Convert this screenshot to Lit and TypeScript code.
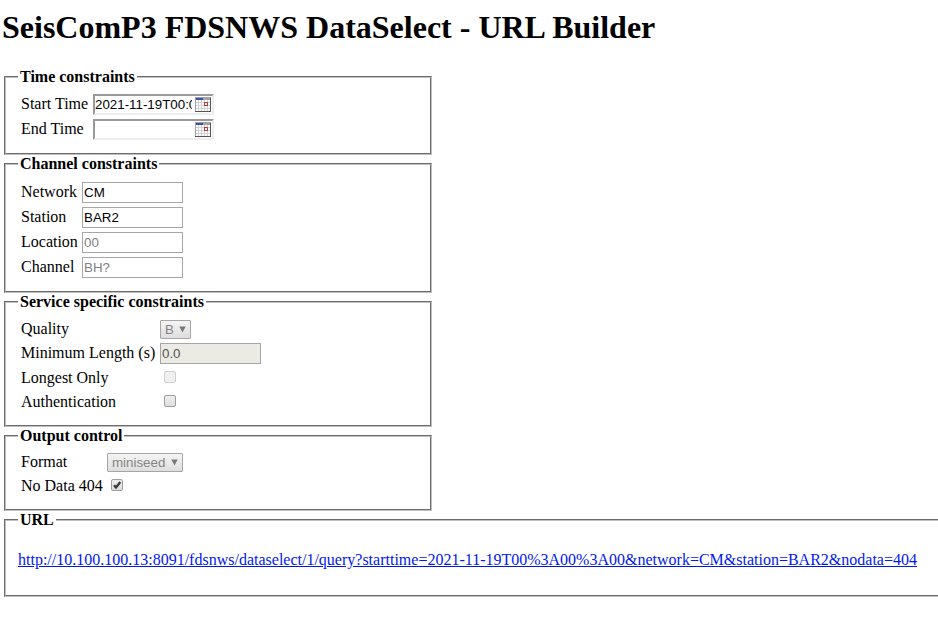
import { LitElement, html, css, svg } from "lit";
import { customElement } from "lit/decorators.js";

const calendarIcon = html`<svg class="calendar" width="16" height="15" viewBox="0 0 16 15" shape-rendering="crispEdges">
  <rect width="16" height="15" fill="#d3d3d3" />
  <rect width="1" height="15" fill="#a3a3a3" />
  <rect width="16" height="3" fill="#a3a3a3" />
  <rect x="1" y="1" width="7" height="2" fill="#3c50a8" />
  ${[3, 6, 9, 12].map((y) => [1, 4, 7, 10, 13].map((x) => svg`<rect x=${x} y=${y} width="2" height="2" fill="#fff" />`))}
  <rect x="9.5" y="5.5" width="3" height="3" fill="#fff" stroke="#b83c3c" />
  <rect x="15" y="1" width="1" height="14" fill="#555" />
  <rect y="14" width="16" height="1" fill="#555" />
</svg>`;

const arrow = html`<svg width="7" height="7" viewBox="0 0 7 7"><path d="M.3 .5h6.4L3.5 6.5z" fill="#777" /></svg>`;

@customElement("app-root")
export class AppRoot extends LitElement {
  static styles = css`
    :host {
      display: block;
      height: 632px;
      overflow: hidden;
      background: #fff;
      color: #000;
      font: 16px/18px "Liberation Serif", serif;
      padding: 0 2px;
      box-sizing: border-box;
    }
    h1 {
      margin: 0;
      height: 68px;
      padding-top: 9px;
      box-sizing: border-box;
      font-size: 32px;
      line-height: 36px;
      white-space: nowrap;
    }
    fieldset {
      box-sizing: border-box;
      width: 428px;
      margin: 0 2px;
      padding: 0 12px;
      border: 2px groove #c0c0c0;
    }
    legend {
      padding: 0 2px;
      height: 18px;
      font-weight: bold;
    }
    .time { height: 87px; }
    .channel { height: 138px; }
    .service { height: 134px; }
    .output { height: 84px; }
    .url { height: 86px; width: 950px; }
    .rows {
      display: grid;
      column-gap: 4px;
      padding-left: 3px;
      align-items: center;
      justify-content: start;
    }
    .rows > label { align-self: start; }
    .time .rows { grid-template-columns: 68px 121px; grid-auto-rows: 25px; padding-top: 6px; }
    .time label { padding-top: 3px; }
    .channel .rows { grid-template-columns: 57px 101px; grid-auto-rows: 25px; padding-top: 7px; }
    .channel label { padding-top: 3px; }
    .service .rows { grid-template-columns: 135px 101px; grid-template-rows: 25px 23px 24px 24px; padding-top: 6px; }
    .service label { padding-top: 3px; }
    .service label.raised { padding-top: 2px; }
    .service label.lowered { padding-top: 4px; }
    .output .rows { grid-template-columns: 82px 76px; grid-template-rows: 23px 23px; padding-top: 6px; }
    .output label { padding-top: 2px; }
    .output label.lowered { padding-top: 3px; }
    input {
      appearance: none;
      box-sizing: border-box;
      margin: 0;
      border-radius: 0;
      outline: none;
      font: 13.333px "Liberation Sans", sans-serif;
      color: #000;
      background: #fff;
    }
    input[type="text"] {
      width: 101px;
      height: 21px;
      padding: 1px;
      border: 1px solid #a6a6a6;
    }
    input::placeholder { color: #808080; opacity: 1; }
    input[type="text"]:disabled { background: #ebebe4; color: #545454; }
    .date { display: grid; align-items: center; width: 121px; height: 21px; }
    .date input[type="text"] {
      grid-area: 1 / 1;
      width: 121px;
      padding: 0 20px 0 0;
      border: 2px solid #eee;
      border-top-color: #9a9a9a;
      border-left-color: #9a9a9a;
    }
    .calendar {
      grid-area: 1 / 1;
      align-self: start;
      justify-self: end;
      margin: 3px 3px 0 0;
      z-index: 1;
    }
    .select {
      box-sizing: border-box;
      display: flex;
      align-items: center;
      justify-content: space-between;
      justify-self: start;
      height: 19px;
      padding: 0 4px;
      border: 1px solid #a6a6a6;
      border-radius: 1px;
      background: linear-gradient(#f4f4f4, #dedede);
      font: 13.333px/17px "Liberation Sans", sans-serif;
      color: #858585;
    }
    .select svg { margin-bottom: 1px; }
    .small { width: 31px; }
    .wide { width: 76px; }
    .check {
      display: block;
      box-sizing: border-box;
      width: 12px;
      height: 12px;
      margin-left: 4px;
      margin-bottom: 1px;
      border: 1px solid #9d9d9d;
      border-radius: 2px;
      background: linear-gradient(#ededed, #dedede);
    }
    .output .check { margin-bottom: 2px; }
    .check.off { border-color: #d0d0d0; background: #f0f0f0; }
    .check svg { display: block; overflow: visible; }
    a {
      display: inline-block;
      margin-top: 22px;
      color: #0018ee;
      white-space: nowrap;
    }
  `;

  private date(value: string) {
    return html`<div class="date"><input type="text" .value=${value} />${calendarIcon}</div>`;
  }

  render() {
    return html`
      <h1>SeisComP3 FDSNWS DataSelect - URL Builder</h1>
      <fieldset class="time">
        <legend>Time constraints</legend>
        <div class="rows">
          <label>Start Time</label>${this.date("2021-11-19T00:00:00")}
          <label>End Time</label>${this.date("")}
        </div>
      </fieldset>
      <fieldset class="channel">
        <legend>Channel constraints</legend>
        <div class="rows">
          <label>Network</label><input type="text" value="CM" />
          <label>Station</label><input type="text" value="BAR2" />
          <label>Location</label><input type="text" placeholder="00" />
          <label>Channel</label><input type="text" placeholder="BH?" />
        </div>
      </fieldset>
      <fieldset class="service">
        <legend>Service specific constraints</legend>
        <div class="rows">
          <label>Quality</label><span class="select small">B ${arrow}</span>
          <label class="raised">Minimum Length (s)</label><input type="text" value="0.0" disabled />
          <label class="lowered">Longest Only</label><span class="check off"></span>
          <label class="lowered">Authentication</label><span class="check"></span>
        </div>
      </fieldset>
      <fieldset class="output">
        <legend>Output control</legend>
        <div class="rows">
          <label>Format</label><span class="select wide">miniseed ${arrow}</span>
          <label class="lowered">No Data 404</label>
          <span class="check"><svg width="10" height="10" viewBox="0 0 10 10"><path d="M2 5.2L4 7.5 8.3 2" fill="none" stroke="#383838" stroke-width="2.3" /></svg></span>
        </div>
      </fieldset>
      <fieldset class="url">
        <legend>URL</legend>
        <a href="#">http://10.100.100.13:8091/fdsnws/dataselect/1/query?starttime=2021-11-19T00%3A00%3A00&amp;network=CM&amp;station=BAR2&amp;nodata=404</a>
      </fieldset>
    `;
  }
}
